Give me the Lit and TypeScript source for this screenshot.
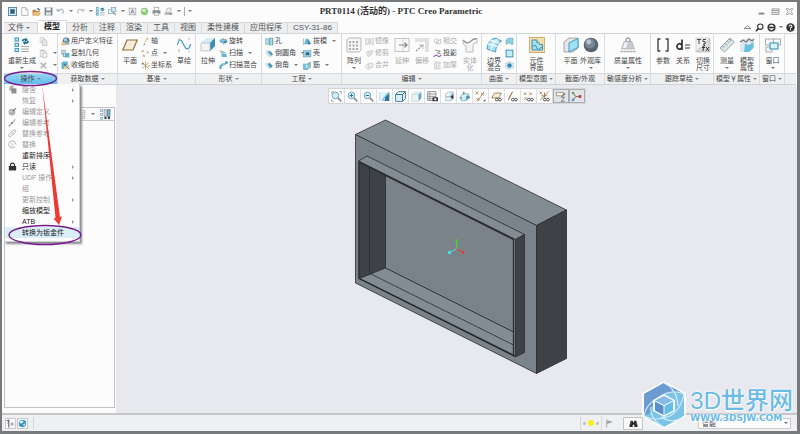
import { LitElement, html, svg, css, TemplateResult } from "lit";
import { customElement, property } from "lit/decorators.js";
import { classMap } from "lit/directives/class-map.js";

const cube = (a = "#7cc9e6", b = "#c9edf8", c = "#3c8fb5") => svg`
  <path d="M1 5L5 1H15V10L11 15H1Z" fill="${a}"/><path d="M1 5L5 1H15L11 5Z" fill="${b}"/>
  <path d="M11 5L15 1V10L11 15Z" fill="${c}"/>`;
const gauge = (x: number, y: number) => svg`
  <path d="M${x} ${y - 2}L${x + 4} ${y + 2}M${x + 4} ${y - 2}L${x} ${y + 2}" stroke="#a8824a" stroke-width="1.2"/>`;
const glasses = svg`<circle cx="8.5" cy="12.5" r="2" fill="#fff" stroke="#444" stroke-width="1.3"/>
  <circle cx="13" cy="12.5" r="2" fill="#fff" stroke="#444" stroke-width="1.3"/>`;
const lens = svg`<path d="M10 10L15 15" stroke="#8b8f95" stroke-width="2.4"/>
  <circle cx="6.5" cy="6.5" r="4.8" fill="#d5effa" stroke="#6f9db5" stroke-width="1.4"/>`;
const page = svg`<path d="M3 1H10L14 5V15H3Z" fill="#fdfdfd" stroke="#9a9a9a" stroke-width="1.2"/><path d="M10 1V5H14" fill="#ddd" stroke="#9a9a9a"/>`;

const ICONS: Record<string, TemplateResult> = {
  app: svg`<rect x=".8" y=".8" width="14.4" height="14.4" fill="#d8eaf3" stroke="#4b86a5" stroke-width="1.6"/><rect x="4" y="4" width="8" height="8" fill="#2c5f80"/>`,
  page,
  open: svg`<path d="M1 5H6L8 7H13V15H1Z" fill="#b98848"/><path d="M3 9H16L13 15H1Z" fill="#e6bd78"/><path d="M8 3Q11 0 13 4L15 3.500L13.500 7L10.500 5Z" fill="#5a7c95"/>`,
  save: svg`<path d="M1 1H15V15H1Z" fill="#7e848a"/><rect x="4" y="1" width="8" height="5.500" fill="#eef0f2"/><rect x="3.500" y="9" width="9" height="6" fill="#d6dade"/>`,
  undo: svg`<path d="M2 7H7M2 7V3M2.500 7Q6 3 10 4Q15 6 12 12" fill="none" stroke="#a9adb2" stroke-width="1.8"/>`,
  redo: svg`<path d="M14 7H9M14 7V3M13.500 7Q10 3 6 4Q1 6 4 12" fill="none" stroke="#b9bcc0" stroke-width="1.8"/>`,
  regen: svg`<g fill="#bfe6f5" stroke="#3f95ba"><rect x="1" y="1" width="3.600" height="3"/><rect x="1" y="6.300" width="3.600" height="3"/><rect x="1" y="11.600" width="3.600" height="3"/></g>
    <path d="M7 9.500H15M7 12H15M7 14.500H15" stroke="#9a9da1" stroke-width=".9"/>
    <path d="M7.500 4Q8.500 1 11.500 1.800L12 .500L14 3.500L10.500 4.500L11 3.300Q9.800 3 9.500 4.500ZM15 4Q14.500 7.300 11.300 6.800L10.800 8L8.800 5.200L12 4.200L11.700 5.300Q12.700 5.500 13 4Z" fill="#1d6e98"/>`,
  windows: svg`<rect x="1" y="5" width="8" height="7" fill="#e8f4f9" stroke="#6b93a8"/><rect x="6" y="1" width="8" height="7" fill="#cfe9f4" stroke="#6b93a8"/><path d="M9 9L14 14" stroke="#888" stroke-width="2"/>`,
  closeWin: svg`<rect x="2" y="2" width="12" height="12" fill="#f2f4f5" stroke="#888"/><path d="M5 12L8 4L11 12M6 9H10" fill="none" stroke="#667" stroke-width="1.200"/>`,
  ball: svg`<circle cx="8" cy="8" r="6.500" fill="#8fc97a"/><ellipse cx="7" cy="6" rx="3.500" ry="2.500" fill="#d8f2cc"/>`,
  printer: svg`<rect x="4" y="1" width="8" height="6" fill="#fff" stroke="#8a8d90"/><rect x="1" y="6" width="14" height="6" fill="#8a9096"/><rect x="4" y="10" width="8" height="4.500" fill="#f3f3f3" stroke="#8a8d90"/>`,
  send: svg`<path d="M3 10L6 2H13L11 10Z" fill="#eef0f2" stroke="#999"/><path d="M1 10H15V14H1Z" fill="#b4b8bc"/><path d="M9 12H14" stroke="#666"/>`,
  copy: svg`<path d="M2 1H8L10 3V10H2Z" fill="#f2f2f2" stroke="#bbb"/><path d="M6 5H12L14 7V15H6Z" fill="#e8e8e8" stroke="#aaa"/>`,
  paste: svg`<rect x="2" y="3" width="9" height="11" fill="#eee" stroke="#bbb"/><rect x="4.500" y="1" width="4" height="3" fill="#bbb"/><path d="M7 7H14V15H7Z" fill="#f7f7f7" stroke="#aaa"/>`,
  cross: svg`<path d="M3 3L13 13M13 3L3 13" stroke="#b0b0b0" stroke-width="2.400"/>`,
  udf: svg`<circle cx="9" cy="7" r="6" fill="#5a7184"/><path d="M4 3L10 2L12 7L6 8Z" fill="#9fd9ee"/><rect x="1" y="9" width="7" height="6" fill="#e5c184"/><circle cx="12" cy="11" r="3" fill="#88b9cf"/>`,
  copyGeom: svg`<path d="M1 2H8V9H1Z" fill="#c8dbe4" stroke="#7d9cab"/><path d="M7 7H15V15H7Z" fill="#64b4d6"/><path d="M4 7V13H8" fill="none" stroke="#777" stroke-width="1.400"/>`,
  shrink: svg`<path d="M1 3L4 1H12V11L9 14H1Z" fill="#5fb3d3"/><path d="M5 7H15V15H5Z" fill="#e6d2a4"/><path d="M6 6L14 14M6 10V6H10" stroke="#2f7ea3" stroke-width="1.600" fill="none"/>`,
  plane: svg`<path d="M5 3H15.200L11 13H.800Z" fill="#f6ecd8" stroke="#94733c" stroke-width="1.200"/>`,
  axis: svg`<path d="M12 1L9.500 6M8.700 7.500L8 9M7 10.500L5 15" stroke="#a07a3e" stroke-width="1.500"/>`,
  points: svg`${gauge(1, 4)}${gauge(10, 6)}${gauge(3, 12)}`,
  csys: svg`<path d="M2 2L14 14M8 1V15M14 3L2 13" stroke="#a58756" stroke-width="1.200"/><path d="M1 5H5M3 3V7M12 9H16" stroke="#8b6a35" stroke-width="1.300"/>`,
  sketch: svg`<path d="M1.500 8Q3 0 6 4.500Q8 8.500 9.500 11Q13 14 14.500 7" fill="none" stroke="#3c9cc6" stroke-width="1.200"/><path d="M3 1V3M13 1V3M3 12V15M13 14V15.500" stroke="#aaa"/>`,
  extrude: svg`<path d="M1 6L7 1H15V9L10 14H1Z" fill="#8fcfe6"/><path d="M1 6L7 1H15L10 6Z" fill="#d2eff8"/><path d="M10 6L15 1V9L10 14Z" fill="#3b8eb3"/><path d="M1 6H10V14H1Z" fill="#f1f3f4" stroke="#b5babd" stroke-width=".8"/>`,
  revolve: svg`<path d="M8 2V14" stroke="#888"/><ellipse cx="8" cy="7" rx="6.500" ry="3.200" fill="#7cc3de" stroke="#3d87a7"/><path d="M9 7L15 8L10 12Z" fill="#2f7899"/>`,
  sweep: svg`<path d="M1 2L7 4L13 8L14 14H5L4 8Z" fill="#64b3d2"/><path d="M1 2L7 4L6 8L4 8Z" fill="#d6c38d"/><path d="M5 8H13" stroke="#e5f5fb"/>`,
  sweepBlend: svg`<path d="M3 14Q0 8 7 6Q13 6 14 1" fill="none" stroke="#88c4db" stroke-width="4"/><path d="M3 14Q2 9 7 7" stroke="#397e9e" stroke-width="1.500" fill="none"/><circle cx="13" cy="3" r="2" fill="#3d86a8"/>`,
  hole: svg`<path d="M1 3H6V13H1Z" fill="#b4dceb" stroke="#7aa4b6"/><path d="M8 2H14V14H8Z" fill="#6dbbd8" stroke="#4787a3"/><path d="M11 3V14" stroke="#e9f7fb" stroke-width="1.500"/>`,
  round: svg`<path d="M1 2H7Q14 4 15 10L9 15L2 9Z" fill="#d7dfe3"/><path d="M7 3Q13 5 14 10L10 12Q9 7 5 6Z" fill="#4ba4c9"/>`,
  chamfer: svg`<path d="M1 3H8L14 9L8 15L1 9Z" fill="#d3e2e8"/><path d="M8 3L14 9L10 13L5 6Z" fill="#4098bd"/>`,
  draft: svg`<path d="M2 13L5 3H9L14 13Z" fill="#62b6d6"/><path d="M9 3L14 13H9Z" fill="#367f9f"/><path d="M1 3V14" stroke="#888"/>`,
  shell: svg`<rect x="1" y="3" width="13" height="11" fill="#9fd0e2" stroke="#5994ae"/><rect x="5" y="6" width="6" height="5" fill="#2b6080"/>`,
  rib: svg`<path d="M1 5L6 6L13 2V11L8 15H1Z" fill="#7ec3dc" stroke="#5193ae"/><path d="M6 6V12L10 9" fill="none" stroke="#d9f1f9" stroke-width="1.500"/>`,
  pattern: svg`<path d="M1 3L3 1H15V13L13 15H1Z" fill="#f5f6f7" stroke="#b6b9bc"/><g fill="#a9adb0">${[4, 7.5, 11].map(y => [3, 6.5, 10].map(x => svg`<rect x="${x}" y="${y}" width="2" height="2"/>`))}</g>`,
  mirror: svg`<path d="M1 2L6 4V12L1 14Z M15 2L10 4V12L15 14Z" fill="#eee" stroke="#bbb"/><path d="M8 1V15" stroke="#bbb"/>`,
  trim: svg`<path d="M2 8Q3 3 8 4L14 2L12 9L6 14Z" fill="#ececec" stroke="#b5b5b5"/><circle cx="9" cy="8" r="2.500" fill="#fff" stroke="#aaa"/>`,
  merge: svg`<circle cx="6" cy="10" r="4.500" fill="#f3f3f3" stroke="#bbb"/><path d="M6 4H14V11H6Z" fill="#eee" stroke="#b5b5b5"/>`,
  extend: svg`<rect x="1" y="1.500" width="14" height="13" fill="#fafafa" stroke="#c4c4c4"/><path d="M9 2V14" stroke="#d5d5d5"/><path d="M5 8H13M10.500 5.500L13 8L10.500 10.500" stroke="#888" stroke-width="1.200" fill="none"/>`,
  offset: svg`<path d="M1 1H15V15H11V5H1Z" fill="#e0e1e3"/><path d="M2 14L9 8M5.500 8H9V11.500" fill="none" stroke="#8f8f8f" stroke-width="1.100" stroke-dasharray="2 1"/>`,
  intersect: svg`<circle cx="6" cy="7" r="4" fill="none" stroke="#bbb" stroke-width="1.300"/><path d="M6 8L14 4L13 12H7Z" fill="none" stroke="#bbb" stroke-width="1.300"/>`,
  project: svg`<path d="M4 2L13 4L8 7L14 9" fill="none" stroke="#666" stroke-width="1.300"/><path d="M1 14Q5 9 8 12Q11 15 15 11" fill="none" stroke="#8b4fa7" stroke-width="1.800"/>`,
  thicken: svg`<path d="M3 2H13V5H6V11H13V14H3Z" fill="#eee" stroke="#b8b8b8"/><path d="M8 8H13" stroke="#aaa"/>`,
  solidify: svg`<path d="M1 3Q5 8 9 4Q12 1 15 2V6Q12 5 11 8V15H4V9Q1 9 1 3Z" fill="#f4f5f5" stroke="#b9bbbd"/><path d="M1 3Q5 8 9 4Q12 1 15 2" fill="none" stroke="#999" stroke-width="1.300"/>`,
  boundary: svg`<path d="M1 12Q2 3 9 1L15.500 4Q10 7 9.500 15Z" fill="#a9e0f2" stroke="#4d9cbd"/><path d="M5 13.500Q6 5 12 2.500M2 7Q7 7.500 11 9.500M4.500 3.500Q9 4 13 6" fill="none" stroke="#f7fdff" stroke-width="1.300"/>`,
  fillSrf: svg`<path d="M2 13V6Q3 2 8 2H14V13H11Q9 8 2 13Z" fill="#8ed3ea" stroke="#4c94b2"/>`,
  square: svg`<rect x="2" y="2" width="12" height="12" fill="#c6ebf7" stroke="#3d95bb" stroke-width="1.800"/>`,
  freestyle: svg`<path d="M1 4L8 1L15 4V12L8 15L1 12Z" fill="#d8eef5" stroke="#8ba9b5" stroke-dasharray="2 1"/><circle cx="8" cy="8" r="4" fill="#2f8ab5"/>`,
  component: svg`<rect x=".500" y=".500" width="15" height="15" fill="#f4dcab" stroke="#d3ae72"/><path d="M3 9V3H8V6Q10.500 4 10.500 7.500H13.500V13H3Z" fill="#a7dff2" stroke="#4590b0"/><path d="M3 10Q7 6.500 7.500 10.500T13 10" fill="none" stroke="#4590b0"/>`,
  section: svg`<path d="M1 5L6 1H15V11L10 15H1Z" fill="#e3e5e6" stroke="#85898c" stroke-width=".700"/><path d="M6 6L15 1.500V10.500L6 15Z" fill="#9fe2f7" stroke="#3a9dc5"/>`,
  sphere: svg`<circle cx="8" cy="8" r="7.300" fill="#586571"/><circle cx="7" cy="6.500" r="5" fill="#7b8894"/><circle cx="5.800" cy="5" r="2.400" fill="#bac4cc"/>`,
  mass: svg`<circle cx="8" cy="3" r="2" fill="none" stroke="#9a9da0" stroke-width="1.300"/><path d="M4 4.500H12L14.500 12H1.500Z" fill="#c4cacf" stroke="#a3a7aa" stroke-width=".600"/><path d="M4.500 5.500H8L6 11H3Z" fill="#eff1f2"/><path d="M0 14.500H16M2 13.500V15.500M5 13.500V15.500M8 13.500V15.500M11 13.500V15.500M14 13.500V15.500" stroke="#a2a2a2" stroke-width=".700"/>`,
  brackets: svg`<path d="M5.500 2H3V14H5.500M10.500 2H13V14H10.500" fill="none" stroke="#444" stroke-width="1.400"/>`,
  deq: svg`<path d="M7 2.500V13M7 9.500A2.500 2.700 0 1 1 7 9.400" fill="none" stroke="#333" stroke-width="1.700"/><path d="M10 8H15M10 11H15" stroke="#333" stroke-width="1.200"/>`,
  switchDim: svg`<path d="M1 1H15L1 15Z" fill="#f2f2f2" stroke="#bbb" stroke-width=".600"/><path d="M15 2V15H2Z" fill="#dadcde" stroke="#aaa" stroke-width=".600"/><path d="M2 2.500H6M4 2.500V7M11 2.500H8V4.500H10V7H8" fill="none" stroke="#444"/><path d="M10 8.500Q8.500 8 8.500 10L8 14M7 10.500H10M11 10L14 14M14 10L11 14" fill="none" stroke="#333"/>`,
  ruler: svg`<path d="M1 11L11 1L15.500 5L5.500 15Z" fill="#dfe6ea" stroke="#98a6ae"/><path d="M3.500 9L5 10.500M6 6.500L8 8.500M8.500 4L10 5.500M10.500 2L12 4" stroke="#6d8a99"/>`,
  modelProps: svg`<path d="M1 5L6 1.500H15V10L10 15H1Z" fill="#e0e7ea"/><path d="M6 7L10 8V15H5ZM10 8L14.500 5V11L10 15Z" fill="#68bfdf"/><path d="M1 5L4 3L7 5L10 2L13 4L15 2" fill="none" stroke="#6f7a80" stroke-width="1.300"/>`,
  windowIcon: svg`<g fill="#f6f7f8" stroke="#a9acaf"><rect x=".500" y="2" width="8" height="6"/><rect x="8.500" y="2" width="7" height="6"/><rect x="1" y="10" width="6" height="5"/></g><rect x="5" y="6" width="8" height="6" fill="#d9f2fb" stroke="#4c9fc2" stroke-width="1.200"/>`,
  zoomFit: svg`<path d="M1 4V1H4M12 1H15V4M1 12V15H4" fill="none" stroke="#888"/>${lens}`,
  zoomIn: svg`${lens}<path d="M4 6.500H9M6.500 4V9" stroke="#1f6f97" stroke-width="1.400"/>`,
  zoomOut: svg`${lens}<path d="M4 6.500H9" stroke="#1f6f97" stroke-width="1.400"/>`,
  repaint: svg`<rect x="1" y="1.500" width="14" height="13" fill="#2d7698"/><path d="M1 1.500H15Q9 5 8 14.500H1Z" fill="#e3f3f9"/><path d="M15 3Q9 6 5 14.500" stroke="#75bdda" stroke-width="2" fill="none"/>`,
  shaded: svg`<path d="M1 5L5 1H15V11L11 15H1Z" fill="#fff" stroke="#276c8d" stroke-width="1.400"/><path d="M1 5H11V15M11 5L15 1" fill="none" stroke="#276c8d" stroke-width="1.400"/><path d="M2 6H10V14H2Z" fill="#d7f0f8"/>`,
  saved: svg`${cube("#eef4f6", "#ddebf0", "#5aaccc")}<path d="M1 5H11V15H1Z" fill="none" stroke="#b3c3ca" stroke-width=".800"/>`,
  viewMgr: svg`<rect x="1" y="1" width="12" height="13" fill="#eee" stroke="#777"/><path d="M1 4.500H13M1 8H13M1 11H13M4 1V14" stroke="#888"/><rect x="8" y="9" width="8" height="6" rx="1" fill="#333"/><circle cx="12" cy="12" r="1.700" fill="#ddd"/>`,
  persp: svg`<path d="M4 4L8 1.500H15V11L11 14H4Z" fill="#eef5f8" stroke="#9ab0ba"/><path d="M11 4.500L15 2V11L11 14Z" fill="#8ec5db"/><path d="M15 5.500L10.500 8.500L15 11.500Z" fill="#333"/><path d="M5 8.500H10" stroke="#777"/>`,
  standard: svg`<path d="M3 6L6 4H14V11L11 14H3Z" fill="#d5eef7" stroke="#6dabc4"/><path d="M10 8L14 5V11L10 14Z" fill="#5aabc9"/><path d="M7 1V5M1 10H4M12 9H16" stroke="#444" stroke-width="1.300"/>`,
  datums: svg`${gauge(1, 3)}${gauge(9, 5)}${gauge(2, 12)}<path d="M13 1L4 15" stroke="#8c6c38"/><path d="M15 12V15H12Z" fill="#333"/>`,
  planeTag: svg`<path d="M5 3H15L11 10H1Z" fill="#f8f2e4" stroke="#94733c" stroke-width="1.200"/>${glasses}`,
  axisTag: svg`<path d="M8 1L2 13" stroke="#94733c" stroke-width="1.500"/>${glasses}`,
  pointTag: svg`${gauge(1, 4)}${gauge(9, 4)}${gauge(2, 11)}${glasses}`,
  csysTag: svg`${gauge(1, 3)}<path d="M14 1L2 13M3 7H12M8 2V10" stroke="#94733c" stroke-width="1.200"/>${glasses}`,
  annot: svg`<path d="M2 2H12V7H2Z" fill="#fff6d8" stroke="#777"/><path d="M12 4H15L9 9H14L9 15H14" fill="none" stroke="#555"/>`,
  spin: svg`<path d="M7 8L3 3M7 8L3 13M7 8H13" stroke="#555" stroke-width="1.200"/><circle cx="3" cy="3" r="2" fill="#5ea75a"/><circle cx="3" cy="13" r="2" fill="#4a9fc9"/><circle cx="13" cy="8" r="2.400" fill="#c84b42"/>`,
  suppress: svg`<path d="M2 4L5 1H10V7L7 10H2Z" fill="#b5b5b5"/><rect x="6" y="6" width="9" height="9" fill="#8d8d8d"/>`,
  editDef: svg`<circle cx="7" cy="9" r="6" fill="#b0b0b0"/><path d="M6 10L14 2" stroke="#777" stroke-width="2"/><circle cx="6" cy="8" r="2" fill="#e5e5e5"/>`,
  editRef: svg`<path d="M2 14L7 9M7 9L13 2" stroke="#aaa" stroke-width="1.800"/><circle cx="7" cy="9" r="2" fill="#888"/><circle cx="2.500" cy="13.500" r="1.500" fill="#999"/>`,
  replRef: svg`<path d="M2 13Q0 10 3 8L9 2Q14 0 14 5L8 11Q4 15 2 13M5 10L10 5" fill="none" stroke="#aaa" stroke-width="1.500"/>`,
  replace: svg`<path d="M3 3Q8 0 12 3L14 8M13 12Q8 16 4 13L1 8L3 3" fill="none" stroke="#aaa" stroke-width="1.500"/><path d="M5 5L9 8L6 12" fill="none" stroke="#999"/>`,
  lock: svg`<path d="M4.500 8V5Q4.500 2 8 2T11.500 5V8" fill="none" stroke="#333" stroke-width="2"/><rect x="1.500" y="7" width="13" height="8" fill="#333"/>`,
  sheet: svg`<rect x="2" y="1" width="12" height="14" fill="#fafafa" stroke="#999"/><path d="M2 5H14M2 8.500H14M2 12H14M6 1V15" stroke="#aaa"/>`,
  treeCols: svg`<g fill="#cfe9f4" stroke="#6aa7c2" stroke-width=".800"><rect x="1" y="1" width="3" height="3"/><rect x="1" y="6.500" width="3" height="3"/><rect x="1" y="12" width="3" height="3"/></g><rect x="6" y="1" width="3" height="10" fill="#f2f2f2" stroke="#777"/><rect x="11" y="1" width="3.500" height="10" fill="#6bb8d8" stroke="#477"/><circle cx="8" cy="13" r="1.800" fill="#444"/><circle cx="13" cy="13" r="1.800" fill="#444"/>`,
  navTree: svg`<path d="M1 3H5M5 1V15" stroke="#555" stroke-width="1.800"/><path d="M2 8H4" stroke="#888"/><circle cx="11" cy="9" r="2" fill="none" stroke="#666" stroke-width="1.200"/>`,
  globe: svg`<circle cx="8" cy="8" r="6.500" fill="#3a9fd0"/><path d="M3 4Q7 1 10 4L7 8L3 7ZM9 9L13 8L11 13Z" fill="#d8eef7"/><path d="M1 12Q8 11 14 3" stroke="#666" stroke-width="1.200" fill="none"/>`,
  search: svg`<circle cx="9.500" cy="6.500" r="4.800" fill="#fff" stroke="#333" stroke-width="2"/><path d="M6 10L1.500 14.500" stroke="#333" stroke-width="2.600"/>`,
  world: svg`<circle cx="8" cy="8" r="6" fill="#fff" stroke="#333" stroke-width="2.600"/><path d="M3 8H13" stroke="#333" stroke-width="3"/>`,
  help: svg`<circle cx="8" cy="8" r="7.500" fill="#333"/><path d="M5.500 6Q5.500 3.500 8 3.500T10.500 6Q10.500 7.500 8 8.500V10" fill="none" stroke="#fff" stroke-width="1.800"/><rect x="7" y="11.200" width="2" height="2" fill="#fff"/>`,
  collapse: svg`<path d="M2 10L8 5L14 10Z" fill="#fff" stroke="#777" stroke-width="1.600"/>`,
  min: svg`<rect x="3" y="10" width="10" height="3.500" fill="#888"/>`,
  max: svg`<rect x="2" y="3.500" width="12" height="9.500" fill="#fff" stroke="#888" stroke-width="1.500"/><path d="M2 6.500H14M4 10H12" stroke="#888" stroke-width="1.600"/>`,
  close: svg`<path d="M2 3H6L8 6L10 3H14L10.500 8L14 13H10L8 10L6 13H2L5.500 8Z" fill="#fff" stroke="#888" stroke-width="1.300"/>`,
  flag: svg`<path d="M3 1V15" stroke="#999" stroke-width="1.500"/><path d="M4 2L14 5L4 9Z" fill="#9c9ea0"/>`,
  binoc: svg`<path d="M3 3H6.500L7.500 6H8.500L9.500 3H13L15 10V14H9.500V10H6.500V14H1V10Z" fill="#222"/><path d="M4 5L3 10M12 5L13 10" stroke="#999"/>`,
};

const icon = (name: string, cls = "s") =>
  html`<svg class="ic ${cls}" viewBox="0 0 16 16" aria-hidden="true">${ICONS[name]}</svg>`;
const caret = html`<i class="caret"></i>`;

type Cmd = { i: string; t?: string; c?: boolean; off?: boolean };

@customElement("ribbon-group")
class RibbonGroup extends LitElement {
  @property() label = "";
  @property({ type: Boolean }) active = false;
  @property({ type: Boolean }) plain = false;
  static styles = css`
    :host { display: flex; flex-direction: column; border-right: 1px solid #d9dbdd; box-sizing: border-box; min-width: 0; }
    .body { display: flex; height: 39px; padding: 1px 1px 0 2px; box-sizing: border-box; justify-content: safe center; }
    .label { all: unset; display: flex; align-items: center; justify-content: center; gap: 2px; height: 10px;
      border-top: 1px solid #d5d7d9; background: #eef0f2; color: #444; white-space: nowrap; cursor: default; }
    .label.active { background: linear-gradient(#93d4f5, #62bcee); }
    .caret { border: 2px solid transparent; border-top-color: #888; border-bottom: 0; }
  `;
  render() {
    return html`<div class="body"><slot></slot></div>
      <button class=${classMap({ label: true, active: this.active })}>${this.label}${this.plain ? "" : caret}</button>`;
  }
}

@customElement("app-root")
class AppRoot extends LitElement {
  static styles = css`
    :host { display: flex; flex-direction: column; box-sizing: border-box; min-height: 100vh; position: relative;
      border: 2px solid #77797c; border-right-width: 3px; border-bottom-width: 3px; background: #fcfcfd;
      font: 7px/10px "Liberation Sans", "Noto Sans CJK SC", sans-serif; color: #444; overflow: hidden; }
    button, select { font: inherit; color: inherit; background: none; border: 0; padding: 0; margin: 0; cursor: default; }
    .ic { display: block; flex: none; }
    .s { width: 9px; height: 9px; }
    .m { width: 11px; height: 11px; }
    .l { width: 16px; height: 16px; }
    .caret { flex: none; border: 2px solid transparent; border-top-color: #777; border-bottom: 0; }

    .title { display: grid; grid-template-columns: 1fr auto 1fr; align-items: center; height: 18px; padding: 0 3px 0 6px; }
    .quick { display: flex; align-items: center; gap: 3px; }
    .quick button { display: flex; align-items: center; gap: 4px; }
    .quick .more { border-left: 1px solid #aaa; padding-left: 3px; height: 9px; }
    h1 { margin: 0; font: bold 9px/12px "Liberation Serif", "Noto Sans CJK SC", serif; color: #333; }
    .win { display: flex; justify-content: flex-end; gap: 5px; }

    .tabs { display: flex; align-items: flex-end; height: 14px; padding-left: 2px; border-bottom: 1px solid #d3d5d8; font-size: 8px; box-sizing: border-box; }
    .tab { display: flex; align-items: center; gap: 2px; height: 11px; padding: 0 5px; background: #eceef0;
      border: 1px solid #d5d7da; border-width: 1px 1px 0 0; box-sizing: border-box; color: #555; white-space: nowrap; }
    .tab:first-child { padding: 0 7px 0 4px; }
    .tab.on { height: 13px; padding: 0 6px; background: #fff; color: #222; font-weight: bold; }
    .aux { display: flex; align-items: center; gap: 3px; margin-left: auto; height: 12px; padding-right: 2px; }

    .ribbon { display: grid; margin: 0 1px 0 2px; background: #fcfcfd; border-bottom: 1px solid #d0d2d5;
      grid-template-columns: 54px 60px 78px 66px 80px 140px 35px 39px 49px 46px 63px 46px 25px minmax(0, 1fr); }
    .big { display: flex; flex-direction: column; align-items: center; width: 20px; flex: none; padding-top: 2px; line-height: 7px; }
    .big.wide { width: 32px; }
    .big .cap { margin-top: 4px; max-width: 16px; text-align: center; }
    .big .cap.one { max-width: none; white-space: nowrap; }
    .big .caret { margin-top: 3px; }
    .stack { display: flex; flex-direction: column; padding-left: 1px; flex: 1; min-width: 0; }
    .row { display: flex; align-items: center; gap: 1px; height: 12px; white-space: nowrap; }
    .row .caret { margin-left: 4px; }
    .off { color: #aaa; }
    .tail { display: flex; flex-direction: column; justify-content: flex-end; }
    .tail::after { content: ""; height: 10px; border-top: 1px solid #d5d7d9; background: #eef0f2; }

    .work { display: flex; flex: 1; background: #e8e9ee; }
    .side { display: flex; flex-direction: column; width: 114px; flex: none; background: #fcfcfd; padding: 22px 1px 5px 2px; box-sizing: border-box; }
    .tree { flex: 1; border: 1px solid #c0c2c5; }
    .treebar { display: flex; align-items: center; justify-content: flex-end; gap: 5px; height: 12px; padding-right: 3px; border-bottom: 1px solid #c6c8cb; }
    .view { flex: 1; display: flex; flex-direction: column; align-items: center; min-width: 0; padding-top: 3px; }
    .viewbar { display: flex; background: #f4f5f7; border: 1px solid #d3d5d8; height: 14px; box-sizing: content-box; }
    .viewbar button { display: flex; align-items: center; justify-content: center; width: 16px; background: #fdfdfe; border-right: 1px solid #dcdee1; box-sizing: border-box; }
    .viewbar button.down { background: #e3e5e9; border: 1px solid #a9acb0; }
    .model { width: 220px; height: 258px; margin-top: 14px; flex: none; }

    .status { display: flex; align-items: center; height: 16px; border-top: 2px solid #c5c6c9; background: #eff0f2; padding: 0 6px 0 3px; }
    .status .sq { display: flex; align-items: center; justify-content: center; width: 11px; height: 11px; border: 1px solid #c9cbce; margin-right: 1px; background: #fafafa; box-sizing: border-box; }
    .sep { width: 1px; height: 12px; background: #d2d4d7; margin-left: 4px; }
    .right { display: flex; align-items: center; margin-left: auto; }
    .dots { display: flex; align-items: center; gap: 2px; padding: 0 2px; border: 1px solid #d6d8db; border-width: 0 1px; height: 14px; }
    .dot { width: 3px; height: 3px; border-radius: 50%; background: #bbb; }
    .dot.on { width: 6px; height: 6px; background: #f7ef1c; }
    .right .ic { margin: 0 3px; }
    .find { display: flex; align-items: center; justify-content: center; width: 20px; height: 13px; margin: 0 55px 0 6px; border: 1px solid #c2c4c7; background: #fafafa; box-sizing: border-box; }
    .pick { display: flex; align-items: center; width: 93px; height: 11px; border: 1px solid #c9cbce; background: #fdfdfd; box-sizing: border-box; }
    .pick select { appearance: none; flex: 1; padding-left: 3px; height: 9px; font-size: 7px; line-height: 9px; outline: 0; }
    .pick .caret { margin: 0 2px; }

    .menu { position: absolute; left: 2px; top: 82px; width: 76px; padding-bottom: 3px; background: #fdfdfd; border: 1px solid #cfd1d4;
      border-top: 0; box-sizing: border-box; box-shadow: 2px 2px 2px #8a8c90; }
    .menu button { display: grid; grid-template-columns: 17px 1fr 5px; align-items: center; width: 100%; height: 11px;
      padding: 0 2px 0 0; text-align: left; color: #222; white-space: nowrap; }
    .menu button.off { color: #999; }
    .menu button.hot { background: #d8eef8; }
    .menu .ic { margin-left: 3px; }
    .menu .t { grid-column: 2; }
    .menu .fly { border: 2px solid transparent; border-left-color: #999; border-right: 0; width: 0; }
    .marks { position: absolute; left: -2px; top: -2px; width: 100px; height: 260px; pointer-events: none; }

    .brand { position: absolute; right: 4px; bottom: 1px; display: flex; align-items: center; gap: 3px; pointer-events: none; }
    .brand svg { width: 46px; height: 50px; }
    .brand p { margin: 0; color: #6bbbe6; text-shadow: 0 0 2px #fff, 0 0 2px #fff, 1px 1px 1px #fff; white-space: nowrap; }
    .brand .name { font: 500 24px/26px "Liberation Sans", "Noto Sans CJK SC", sans-serif; }
    .brand .url { font: bold 9px/9px "DejaVu Sans", sans-serif; }
  `;

  private big(i: string, t: string, o: { c?: boolean; off?: boolean; two?: boolean; wide?: boolean } = {}) {
    return html`<button class=${classMap({ big: true, wide: !!o.wide, off: !!o.off })}>
      ${icon(i, "l")}<span class=${classMap({ cap: true, one: !o.two })}>${t}</span>${o.c ? caret : ""}</button>`;
  }
  private stack(rows: Cmd[]) {
    return html`<div class="stack">${rows.map(r => html`<button class=${classMap({ row: true, off: !!r.off })}
      aria-label=${r.t ?? r.i}>${icon(r.i)}${r.t ?? ""}${r.c ? caret : ""}</button>`)}</div>`;
  }

  private ribbon() {
    const { big, stack } = this;
    return html`<div class="ribbon">
      <ribbon-group label="操作" active>${big("regen", "重新生成", { c: true, wide: true })}
        ${stack([{ i: "copy" }, { i: "paste", c: true }, { i: "cross", c: true }])}</ribbon-group>
      <ribbon-group label="获取数据">${stack([{ i: "udf", t: "用户定义特征" }, { i: "copyGeom", t: "复制几何" }, { i: "shrink", t: "收缩包络" }])}</ribbon-group>
      <ribbon-group label="基准">${big("plane", "平面")}
        ${stack([{ i: "axis", t: "轴" }, { i: "points", t: "点", c: true }, { i: "csys", t: "坐标系" }])}${big("sketch", "草绘")}</ribbon-group>
      <ribbon-group label="形状">${big("extrude", "拉伸")}
        ${stack([{ i: "revolve", t: "旋转" }, { i: "sweep", t: "扫描", c: true }, { i: "sweepBlend", t: "扫描混合" }])}</ribbon-group>
      <ribbon-group label="工程">${stack([{ i: "hole", t: "孔" }, { i: "round", t: "倒圆角", c: true }, { i: "chamfer", t: "倒角", c: true }])}
        ${stack([{ i: "draft", t: "拔模", c: true }, { i: "shell", t: "壳" }, { i: "rib", t: "筋", c: true }])}</ribbon-group>
      <ribbon-group label="编辑">${big("pattern", "阵列", { c: true })}
        ${stack([{ i: "mirror", t: "镜像", off: true }, { i: "trim", t: "修剪", off: true }, { i: "merge", t: "合并", off: true }])}
        ${big("extend", "延伸", { off: true })}${big("offset", "偏移", { off: true })}
        ${stack([{ i: "intersect", t: "相交", off: true }, { i: "project", t: "投影" }, { i: "thicken", t: "加厚", off: true }])}
        ${big("solidify", "实体化", { off: true, two: true })}</ribbon-group>
      <ribbon-group label="曲面">${big("boundary", "边界混合", { two: true })}${stack([{ i: "fillSrf" }, { i: "square" }, { i: "freestyle" }])}</ribbon-group>
      <ribbon-group label="模型意图">${big("component", "元件界面", { two: true })}</ribbon-group>
      <ribbon-group label="截面/外观" plain>${big("section", "平面")}${big("sphere", "外观库", { c: true })}</ribbon-group>
      <ribbon-group label="敏感度分析">${big("mass", "质量属性", { c: true })}</ribbon-group>
      <ribbon-group label="跟踪草绘">${big("brackets", "参数")}${big("deq", "关系")}${big("switchDim", "切换尺寸", { two: true })}</ribbon-group>
      <ribbon-group label="模型￥属性">${big("ruler", "测量", { c: true })}${big("modelProps", "模型属性", { two: true })}</ribbon-group>
      <ribbon-group label="窗口">${big("windowIcon", "窗口", { c: true })}</ribbon-group>
      <div class="tail"></div>
    </div>`;
  }

  private model() {
    return html`<svg class="model" viewBox="347 118 220 258" role="img" aria-label="PRT0114">
      <g stroke="#2a2d31" stroke-width=".8" stroke-linejoin="round">
        <path d="M355.500 134.500L385.500 120L566.500 210L536.500 225.500Z" fill="#838b93"/>
        <path d="M355.500 134.500L536.500 225.500V373.500L355.500 283Z" fill="#7a8389"/>
        <path d="M536.500 225.500L566.500 210V358.500L536.500 373.500Z" fill="#3e4145"/>
        <path d="M358.500 161L367 156L524.500 234.500L515.500 239.500Z" fill="#838b93"/>
        <path d="M515.500 239.500L524.500 234.500V352.500L515.500 357Z" fill="#3e4145"/>
        <path d="M358.500 161L515.500 239.500V357L358.500 278.500Z" fill="#7a8389"/>
        <path d="M359.500 162.500L385.500 175V268L359.500 278Z" fill="#3e4145"/>
        <path d="M369.500 167.500V273.500"/>
        <path d="M385.500 175.500L513.500 239.500V332L385.500 268Z" fill="#7a8389"/>
        <path d="M385.500 268L513.500 332V355L359.500 278.500Z" fill="#838b93"/>
        <path d="M370 273.500L513.500 345" fill="none"/>
        <path d="M359.500 162.500L513.500 239.500V355.500" fill="none" stroke-width="1.300"/>
        <path d="M359.500 278.500L515 356" fill="none" stroke-width="1.300"/>
      </g>
      <path d="M456.500 249V240" stroke="#3ddc2b"/><path d="M456.500 249L450 252" stroke="#4fd5e0"/><path d="M456.500 249L463 252" stroke="#e2403a"/>
      <circle cx="456.500" cy="240.500" r="1.300" fill="#3ddc2b"/><circle cx="449.500" cy="252.500" r="1.700" fill="#3fe6ee"/><circle cx="463" cy="252.500" r="1.400" fill="#f03c38"/>
    </svg>`;
  }

  private menu() {
    const items: { t: string; i?: string; off?: boolean; fly?: boolean; hot?: boolean }[] = [
      { t: "隐含", i: "suppress", off: true, fly: true }, { t: "恢复", off: true, fly: true },
      { t: "编辑定义", i: "editDef", off: true }, { t: "编辑参考", i: "editRef", off: true },
      { t: "替换参考", i: "replRef", off: true }, { t: "替换", i: "replace", off: true },
      { t: "重新排序" }, { t: "只读", i: "lock", fly: true }, { t: "UDF 操作", off: true, fly: true },
      { t: "组", off: true }, { t: "更新控制", off: true, fly: true }, { t: "缩放模型" },
      { t: "ATB", fly: true }, { t: "转换为钣金件", hot: true },
    ];
    return html`<div class="menu" role="menu">${items.map(m => html`
      <button role="menuitem" class=${classMap({ off: !!m.off, hot: !!m.hot })}>
        ${m.i ? icon(m.i) : ""}<span class="t">${m.t}</span>${m.fly ? html`<i class="fly"></i>` : ""}</button>`)}</div>`;
  }

  render() {
    const quick: [string, boolean?][] = [["app"], ["page"], ["open"], ["save"], ["undo", true], ["redo", true], ["regen"],
      ["windows", true], ["closeWin"], ["ball"], ["printer"], ["send", true]];
    const tabs = ["分析", "注释", "渲染", "工具", "视图", "柔性建模", "应用程序", "CSY-31-86"];
    const views = ["zoomFit", "zoomIn", "zoomOut", "repaint", "shaded", "saved", "viewMgr", "persp", "standard", "datums",
      "planeTag", "axisTag", "pointTag", "csysTag", "annot", "spin"];
    return html`
      <header class="title">
        <div class="quick">${quick.map(([n, c]) => html`<button aria-label=${n}>${icon(n)}${c ? caret : ""}</button>`)}
          <button class="more" aria-label="more">${caret}</button></div>
        <h1>PRT0114 (活动的) - PTC Creo Parametric</h1>
        <div class="win">${["min", "max", "close"].map(n => html`<button aria-label=${n}>${icon(n)}</button>`)}</div>
      </header>
      <nav class="tabs">
        <button class="tab">文件${caret}</button><button class="tab on">模型</button>
        ${tabs.map(t => html`<button class="tab">${t}</button>`)}
        <div class="aux">${["collapse", "search", "world"].map(n => html`<button aria-label=${n}>${icon(n)}</button>`)}${caret}
          <button aria-label="help">${icon("help")}</button></div>
      </nav>
      ${this.ribbon()}
      <main class="work">
        <aside class="side"><div class="tree"><div class="treebar">${icon("sheet")}${caret}${icon("treeCols", "m")}</div></div></aside>
        <section class="view">
          <div class="viewbar">${views.map((n, k) => html`<button aria-label=${n} class=${classMap({ down: k > 13 })}>${icon(n, "m")}</button>`)}</div>
          ${this.model()}
        </section>
      </main>
      <footer class="status">
        <button class="sq" aria-label="tree">${icon("navTree")}</button><button class="sq" aria-label="browser">${icon("globe")}</button><span class="sep"></span>
        <div class="right">
          <span class="dots"><i class="dot"></i><i class="dot on"></i><i class="dot"></i></span>${icon("flag")}
          <button class="find" aria-label="find">${icon("binoc")}</button>
          <label class="pick"><select aria-label="filter"><option>智能</option></select>${caret}</label>
        </div>
      </footer>
      ${this.menu()}
      <svg class="marks" viewBox="0 0 100 260" aria-hidden="true">
        <path d="M42 84L55.500 218L53.500 218.500L59 225L62 216.500L60 217Z" fill="#ee3a35"/>
        <g fill="none" stroke="#7b1c8c" stroke-width="1.400"><ellipse cx="30.500" cy="78.500" rx="26" ry="7"/><ellipse cx="45" cy="235" rx="36" ry="9.500"/></g>
      </svg>
      <div class="brand">
        <svg viewBox="0 0 46 50" aria-hidden="true">
          <path d="M23 1L45 13V37L23 49L1 37V13Z" fill="#fff" opacity=".8"/>
          <path d="M23 3L43 14V36L23 47L3 36V14Z" fill="#7cc3e8"/>
          <path d="M23 3L43 14Q30 8 17 18Q10 24 11 32L3 36V14Z" fill="#6c9bd1"/>
          <path d="M3 36Q5 24 17 18M23 3Q36 9 37 26M43 14Q30 8 17 18M23 47Q9 40 10 27M43 36Q33 45 20 37M3 36Q14 42 29 36Q40 30 43 14" fill="none" stroke="#d9effa" stroke-width="1.100"/>
          <path d="M23 14L34 20V31L23 37L12 31V20Z" fill="#eef8fd"/>
          <path d="M23 16L32 20.500L23 25L14 20.500Z" fill="#87b9e4"/><path d="M14 21.500L22.500 26V35L14 30.500Z" fill="#5a8fcb"/><path d="M32 21.500L23.500 26V35L32 30.500Z" fill="#69bce4"/>
        </svg>
        <div><p class="name">3D世界网</p><p class="url">WWW.3DSJW.COM</p></div>
      </div>`;
  }
}
